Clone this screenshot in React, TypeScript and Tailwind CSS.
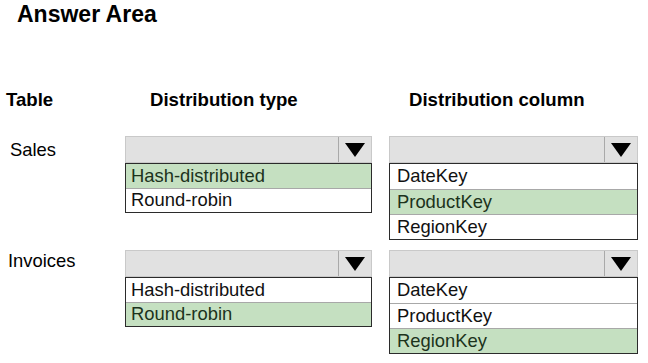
import React from 'react'

interface Option {
  label: string
  selected: boolean
}

interface Row {
  table: string
  labelOffset: string
  types: Option[]
  columns: Option[]
}

const rows: Row[] = [
  {
    table: 'Sales',
    labelOffset: 'pl-[4px] pt-[3px]',
    types: [
      { label: 'Hash-distributed', selected: true },
      { label: 'Round-robin', selected: false }
    ],
    columns: [
      { label: 'DateKey', selected: false },
      { label: 'ProductKey', selected: true },
      { label: 'RegionKey', selected: false }
    ]
  },
  {
    table: 'Invoices',
    labelOffset: 'pl-[2px] pt-[0px]',
    types: [
      { label: 'Hash-distributed', selected: false },
      { label: 'Round-robin', selected: true }
    ],
    columns: [
      { label: 'DateKey', selected: false },
      { label: 'ProductKey', selected: false },
      { label: 'RegionKey', selected: true }
    ]
  }
]

function Dropdown({ options, width, rowClass }: { options: Option[]; width: string; rowClass: string }) {
  return (
    <div className={`flex flex-col ${width}`}>
      {/* Closed select */}
      <div className="flex h-[27px] bg-[#e1e1e1] border border-[#c9c9c9]">
        <div className="flex-1" />
        <div className="w-[33px] flex items-center justify-center border-l border-[#a9a9a9]">
          <svg width="20" height="14" viewBox="0 0 20 14">
            <polygon points="0,0 20,0 10,14" fill="#000" />
          </svg>
        </div>
      </div>
      {/* Options list */}
      <div className="flex flex-col border border-[#2b2b2b] bg-white">
        {options.map((opt, i) => (
          <div
            key={opt.label}
            className={`flex items-center text-[18.4px] ${rowClass} ${
              i > 0 ? 'border-t border-[#a8a8a8]' : ''
            } ${opt.selected ? 'bg-[#c5e0c1] text-[#1c331c]' : 'text-[#111]'}`}
          >
            <span className="leading-none">{opt.label}</span>
          </div>
        ))}
      </div>
    </div>
  )
}

export default function App() {
  return (
    <div className="w-[648px] h-[363px] bg-white overflow-hidden font-['Liberation_Sans',Arial,sans-serif] text-black">
      <h1 className="pl-[17px] pt-[2px] text-[23px] font-bold leading-[25px]">Answer Area</h1>

      <div className="pl-[6px]">
        {/* Header row */}
        <div className="flex mt-[62px] text-[18.6px] font-bold leading-[21px]">
          <div className="w-[119px]">Table</div>
          <div className="w-[247px] pl-[25px]">Distribution type</div>
          <div className="ml-[17px] pl-[20px]">Distribution column</div>
        </div>

        {/* Table rows */}
        <div className="flex flex-col gap-[10px] mt-[26px]">
          {rows.map((row) => (
            <div key={row.table} className="flex items-start">
              <div className={`w-[119px] shrink-0 text-[18.4px] leading-[21px] ${row.labelOffset}`}>
                {row.table}
              </div>
              <div className="flex gap-[17px]">
                <Dropdown options={row.types} width="w-[247px]" rowClass="h-[24px] pl-[5px]" />
                <Dropdown options={row.columns} width="w-[249px]" rowClass="h-[25px] pl-[7px]" />
              </div>
            </div>
          ))}
        </div>
      </div>
    </div>
  )
}
